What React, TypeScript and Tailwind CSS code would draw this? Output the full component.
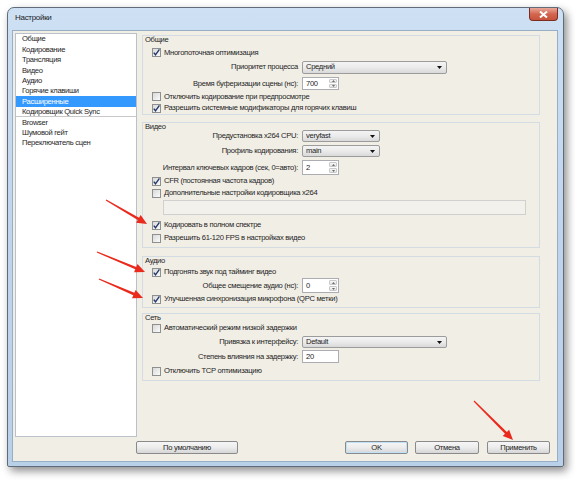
import type { ReactNode } from "react";

const MENU = [
  "Общие",
  "Кодирование",
  "Трансляция",
  "Видео",
  "Аудио",
  "Горячие клавиши",
  "Расширенные",
  "Кодировщик Quick Sync",
  "Browser",
  "Шумовой гейт",
  "Переключатель сцен",
];

const ARROWS = [
  { x1: 106, y1: 200, x2: 147, y2: 224 },
  { x1: 97, y1: 252, x2: 145, y2: 272 },
  { x1: 99, y1: 279, x2: 143, y2: 298 },
  { x1: 474, y1: 401, x2: 513, y2: 440 },
];

function CheckBox({ checked }: { checked?: boolean }) {
  return (
    <span className="relative h-[9px] w-[9px] shrink-0 border border-[#8e8f8f] bg-gradient-to-br from-[#d9d9d9] to-[#fafafa]">
      {checked && (
        <svg width="9" height="9" viewBox="0 0 9 9" className="absolute left-[-1px] top-[-1px]">
          <path d="M1.8 4.6 L3.5 6.8 L7.4 1.4" fill="none" stroke="#23386a" strokeWidth="1.4" />
        </svg>
      )}
    </span>
  );
}

function CheckRow({ label, checked, className = "" }: { label: string; checked?: boolean; className?: string }) {
  return (
    <div className={`flex h-[12px] items-center gap-[3px] pl-[9px] ${className}`}>
      <CheckBox checked={checked} />
      <span>{label}</span>
    </div>
  );
}

function FieldRow({ label, className = "", children }: { label: string; className?: string; children: ReactNode }) {
  return (
    <div className={`flex items-center ${className}`}>
      <span className="w-[155px] shrink-0 text-right">{label}</span>
      <div className="ml-[4px] flex h-full">{children}</div>
    </div>
  );
}

function Combo({ value, className }: { value: string; className: string }) {
  return (
    <div
      className={`flex h-full items-center justify-between rounded-[2px] border border-[#9c9c9c] bg-gradient-to-b from-[#f4f4f4] via-[#ebebeb] to-[#d9d9d9] pl-[3px] pr-[4px] ${className}`}
    >
      <span>{value}</span>
      <svg width="5" height="3" viewBox="0 0 5 3">
        <path d="M0 0H5L2.5 3Z" fill="#111" />
      </svg>
    </div>
  );
}

function Spin({ value }: { value: string }) {
  return (
    <div className="flex h-full w-[37px] items-center justify-between border border-[#abadb3] bg-white pl-[3px]">
      <span>{value}</span>
      <div className="flex h-full w-[10px] flex-col gap-[1px] p-[1px]">
        <div className="flex flex-1 items-center justify-center rounded-[1px] border border-[#c9c9c9] bg-gradient-to-b from-[#f7f7f7] to-[#e4e4e4]">
          <svg width="3" height="2" viewBox="0 0 3 2">
            <path d="M0 2H3L1.5 0Z" fill="#6b6b6b" />
          </svg>
        </div>
        <div className="flex flex-1 items-center justify-center rounded-[1px] border border-[#c9c9c9] bg-gradient-to-b from-[#f7f7f7] to-[#e4e4e4]">
          <svg width="3" height="2" viewBox="0 0 3 2">
            <path d="M0 0H3L1.5 2Z" fill="#6b6b6b" />
          </svg>
        </div>
      </div>
    </div>
  );
}

function Group({ title, className, children }: { title: string; className: string; children: ReactNode }) {
  return (
    <div className={`flex flex-col border border-[#d3dce3] ${className}`}>
      <div className="h-[7px] pl-[2px] leading-[7px]">{title}</div>
      {children}
    </div>
  );
}

function Button({ label, className = "" }: { label: string; className?: string }) {
  return (
    <div
      className={`flex h-[13px] items-center justify-center rounded-[2px] border border-[#8a8a8a] bg-gradient-to-b from-[#f6f6f6] via-[#ececec] to-[#d6d6d6] ${className}`}
    >
      {label}
    </div>
  );
}

function Arrow({ x1, y1, x2, y2 }: { x1: number; y1: number; x2: number; y2: number }) {
  const dx = x2 - x1;
  const dy = y2 - y1;
  const len = Math.hypot(dx, dy);
  const ux = dx / len;
  const uy = dy / len;
  const nx = -uy;
  const ny = ux;
  const head = 10;
  const hw = 4.5;
  const bx = x2 - ux * head;
  const by = y2 - uy * head;
  const pts = [
    [x1 + nx * 0.6, y1 + ny * 0.6],
    [bx + nx * 1.3, by + ny * 1.3],
    [bx + nx * hw, by + ny * hw],
    [x2, y2],
    [bx - nx * hw, by - ny * hw],
    [bx - nx * 1.3, by - ny * 1.3],
    [x1 - nx * 0.6, y1 - ny * 0.6],
  ];
  return <polygon points={pts.map((p) => p.join(",")).join(" ")} fill="#ea2a1c" />;
}

export default function App() {
  return (
    <div className="relative h-[480px] w-[575px] overflow-hidden bg-white font-['Liberation_Sans',Arial,sans-serif] text-[7.6px] leading-none tracking-[-0.3px] text-[#1e1e1e]">
      {/* window */}
      <div className="ml-[7px] mt-[7px] flex h-[460px] w-[557px] flex-col rounded-t-[7px] rounded-b-[2px] border border-[#5f6b78] bg-gradient-to-b from-[#cde0f4] via-[#bfd5ec] to-[#b9d0e9] shadow-[3px_4px_8px_rgba(0,0,0,0.45)]">
        {/* title bar */}
        <div className="flex h-[22px] shrink-0 justify-between pl-[7px]">
          <span className="mt-[6px] text-[8px] text-[#1b1b1b]">Настройки</span>
          <div className="mr-[5px] flex h-[13px] w-[29px] items-center justify-center rounded-b-[4px] border border-t-0 border-[#7c2d22] bg-gradient-to-b from-[#e9a89a] via-[#d3664f] to-[#c8533b]">
            <svg width="9" height="7" viewBox="0 0 9 7">
              <path d="M1 0.5L8 6.5M8 0.5L1 6.5" stroke="#fff" strokeWidth="2" />
            </svg>
          </div>
        </div>

        {/* client area */}
        <div className="mb-[4px] ml-[4px] mr-[5px] flex flex-1 flex-col border border-[#98aec4] bg-[#f1eee6] pl-[2px] pt-[2px]">
          <div className="flex h-[404px]">
            {/* list */}
            <div className="flex w-[122px] flex-col border border-[#b9c2cb] bg-white">
              {MENU.map((item, i) => (
                <div
                  key={item}
                  className={`flex h-[10.4px] shrink-0 items-center pl-[6px] ${
                    i === 6 ? "bg-[#3399ff] text-white" : ""
                  } ${i === 7 ? "border-b border-[#c8c8c8]" : ""}`}
                >
                  {item}
                </div>
              ))}
            </div>

            {/* groups */}
            <div className="ml-[5px] mt-[2px] flex w-[398px] flex-col">
              <Group title="Общие" className="h-[80px]">
                <CheckRow label="Многопоточная оптимизация" checked className="mt-[4px]" />
                <FieldRow label="Приоритет процесса" className="mt-[2px] h-[13px]">
                  <Combo value="Средний" className="w-[145px]" />
                </FieldRow>
                <FieldRow label="Время буферизации сцены (нс):" className="mt-[3px] h-[14px]">
                  <Spin value="700" />
                </FieldRow>
                <CheckRow label="Отключить кодирование при предпросмотре" />
                <CheckRow label="Разрешить системные модификаторы для горячих клавиш" checked />
              </Group>

              <Group title="Видео" className="mt-[7px] h-[126px]">
                <FieldRow label="Предустановка x264 CPU:" className="h-[12px]">
                  <Combo value="veryfast" className="w-[78px]" />
                </FieldRow>
                <FieldRow label="Профиль кодирования:" className="mt-[3px] h-[12px]">
                  <Combo value="main" className="w-[78px]" />
                </FieldRow>
                <FieldRow label="Интервал ключевых кадров (сек, 0=авто):" className="mt-[3px] h-[15px]">
                  <Spin value="2" />
                </FieldRow>
                <CheckRow label="CFR (постоянная частота кадров)" checked />
                <CheckRow label="Дополнительные настройки кодировщика x264" />
                <div className="ml-[20px] mt-[1px] h-[15px] w-[363px] border border-[#d0d0d0] bg-[#f3f1eb]" />
                <CheckRow label="Кодировать в полном спектре" checked className="mt-[4px]" />
                <CheckRow label="Разрешить 61-120 FPS в настройках видео" className="mt-[1px]" />
              </Group>

              <Group title="Аудио" className="mt-[8px] h-[52px]">
                <CheckRow label="Подгонять звук под тайминг видео" checked className="mt-[2px]" />
                <FieldRow label="Общее смещение аудио (нс):" className="h-[15px]">
                  <Spin value="0" />
                </FieldRow>
                <CheckRow label="Улучшенная синхронизация микрофона (QPC метки)" checked />
              </Group>

              <Group title="Сеть" className="mt-[5px] h-[68px]">
                <CheckRow label="Автоматический режим низкой задержки" className="mt-[1px]" />
                <FieldRow label="Привязка к интерфейсу:" className="mt-[2px] h-[12px]">
                  <Combo value="Default" className="w-[145px]" />
                </FieldRow>
                <FieldRow label="Степень влияния на задержку:" className="mt-[2px] h-[13px]">
                  <div className="flex h-full w-[37px] items-center border border-[#abadb3] bg-white pl-[3px]">20</div>
                </FieldRow>
                <CheckRow label="Отключить TCP оптимизацию" className="mt-[2px]" />
              </Group>
            </div>
          </div>

          {/* buttons */}
          <div className="mr-[7px] mt-[4px] flex">
            <Button label="По умолчанию" className="ml-[121px] w-[102px]" />
            <div className="flex-1" />
            <Button
              label="OK"
              className="w-[63px] border-[#3c7fb1] from-[#eef6fc] via-[#dfeefa] to-[#c6e0f4] shadow-[inset_0_0_0_1px_#bfe2fb]"
            />
            <Button label="Отмена" className="ml-[7px] w-[64px]" />
            <Button label="Применить" className="ml-[8px] w-[63px]" />
          </div>
        </div>
      </div>

      {/* red annotation arrows */}
      <svg width="575" height="480" className="pointer-events-none absolute left-0 top-0">
        {ARROWS.map((a, i) => (
          <Arrow key={i} {...a} />
        ))}
      </svg>
    </div>
  );
}
